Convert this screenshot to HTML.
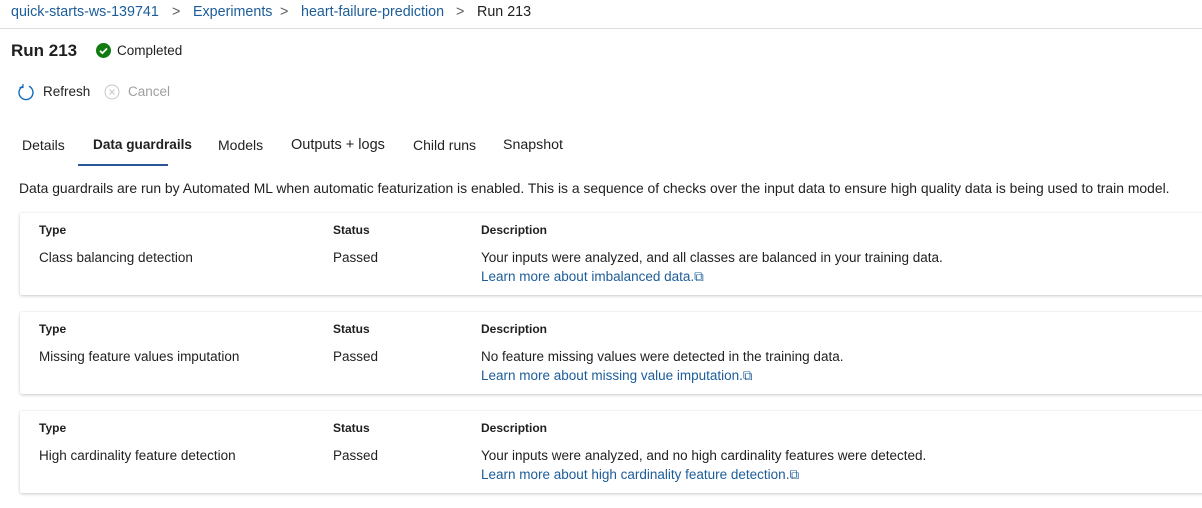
<!DOCTYPE html>
<html><head><style>
body{margin:0;width:1202px;height:508px;overflow:hidden;background:#fff;font-family:"Liberation Sans",sans-serif;font-size:13.5px;color:#201f1e;position:relative}
.a{position:absolute;white-space:nowrap}
.l{color:#1c5d99}
.bc{font-size:14.3px}
.t{font-size:14px}
.card{position:absolute;left:20px;width:1200px;height:82px;background:#fff;box-shadow:0 1px 3px rgba(0,0,0,.2),0 0 1px rgba(0,0,0,.1);border-radius:2px}
.card b{font-size:12px}
</style></head><body>
<div class="a l bc" style="left:11px;top:4px">quick-starts-ws-139741</div>
<div class="a bc" style="left:172px;top:4px;color:#605e5c">&gt;</div>
<div class="a l bc" style="left:193px;top:4px">Experiments</div>
<div class="a bc" style="left:280px;top:4px;color:#605e5c">&gt;</div>
<div class="a l bc" style="left:301px;top:4px">heart-failure-prediction</div>
<div class="a bc" style="left:456px;top:4px;color:#605e5c">&gt;</div>
<div class="a bc" style="left:477px;top:4px">Run 213</div>
<div class="a" style="left:0;top:28px;width:1202px;height:1px;background:#ddd"></div>
<div class="a" style="left:11px;top:41px;font-size:17px;font-weight:bold">Run 213</div>
<svg class="a" style="left:96px;top:43px" width="15" height="15"><circle cx="7.5" cy="7.5" r="7.5" fill="#107c10"/><path d="M4 7.7l2.4 2.4 4.6-4.6" stroke="#fff" stroke-width="1.8" fill="none"/></svg>
<div class="a" style="left:117px;top:43px">Completed</div>
<svg class="a" style="left:17px;top:83px" width="18" height="18"><path d="M12 3.2A7 7 0 1 1 6 3.2" stroke="#0f6cbd" stroke-width="1.4" fill="none"/><path d="M6 1v3.5H2.5" stroke="#0f6cbd" stroke-width="1.2" fill="none"/></svg>
<div class="a" style="left:43px;top:84px">Refresh</div>
<svg class="a" style="left:104px;top:84px" width="16" height="16"><circle cx="8" cy="8" r="7" stroke="#c8c6c4" fill="none"/><path d="M5.5 5.5l5 5M10.5 5.5l-5 5" stroke="#c8c6c4"/></svg>
<div class="a" style="left:128px;top:84px;color:#a19f9d">Cancel</div>
<div class="a t" style="left:22px;top:137px">Details</div>
<div class="a t" style="left:93px;top:137px;font-weight:bold;font-size:13.6px">Data guardrails</div>
<div class="a" style="left:78px;top:164px;width:90px;height:2px;background:#2b5797"></div>
<div class="a t" style="left:218px;top:137px">Models</div>
<div class="a t" style="left:291px;top:137px;font-size:14.5px">Outputs + logs</div>
<div class="a t" style="left:413px;top:137px">Child runs</div>
<div class="a t" style="left:503px;top:137px;font-size:14.2px">Snapshot</div>
<div class="a" style="left:19px;top:180px;font-size:13.9px">Data guardrails are run by Automated ML when automatic featurization is enabled. This is a sequence of checks over the input data to ensure high quality data is being used to train model.</div>

<div class="card" style="top:213px">
<b class="a" style="left:19px;top:10px">Type</b><b class="a" style="left:313px;top:10px">Status</b><b class="a" style="left:461px;top:10px">Description</b>
<div class="a" style="left:19px;top:37px">Class balancing detection</div><div class="a" style="left:313px;top:37px">Passed</div>
<div class="a" style="left:461px;top:37px">Your inputs were analyzed, and all classes are balanced in your training data.</div>
<div class="a l" style="left:461px;top:56px">Learn more about imbalanced data.⧉</div>
</div>
<div class="card" style="top:312px">
<b class="a" style="left:19px;top:10px">Type</b><b class="a" style="left:313px;top:10px">Status</b><b class="a" style="left:461px;top:10px">Description</b>
<div class="a" style="left:19px;top:37px">Missing feature values imputation</div><div class="a" style="left:313px;top:37px">Passed</div>
<div class="a" style="left:461px;top:37px">No feature missing values were detected in the training data.</div>
<div class="a l" style="left:461px;top:56px">Learn more about missing value imputation.⧉</div>
</div>
<div class="card" style="top:411px">
<b class="a" style="left:19px;top:10px">Type</b><b class="a" style="left:313px;top:10px">Status</b><b class="a" style="left:461px;top:10px">Description</b>
<div class="a" style="left:19px;top:37px">High cardinality feature detection</div><div class="a" style="left:313px;top:37px">Passed</div>
<div class="a" style="left:461px;top:37px">Your inputs were analyzed, and no high cardinality features were detected.</div>
<div class="a l" style="left:461px;top:56px">Learn more about high cardinality feature detection.⧉</div>
</div>
</body></html>
